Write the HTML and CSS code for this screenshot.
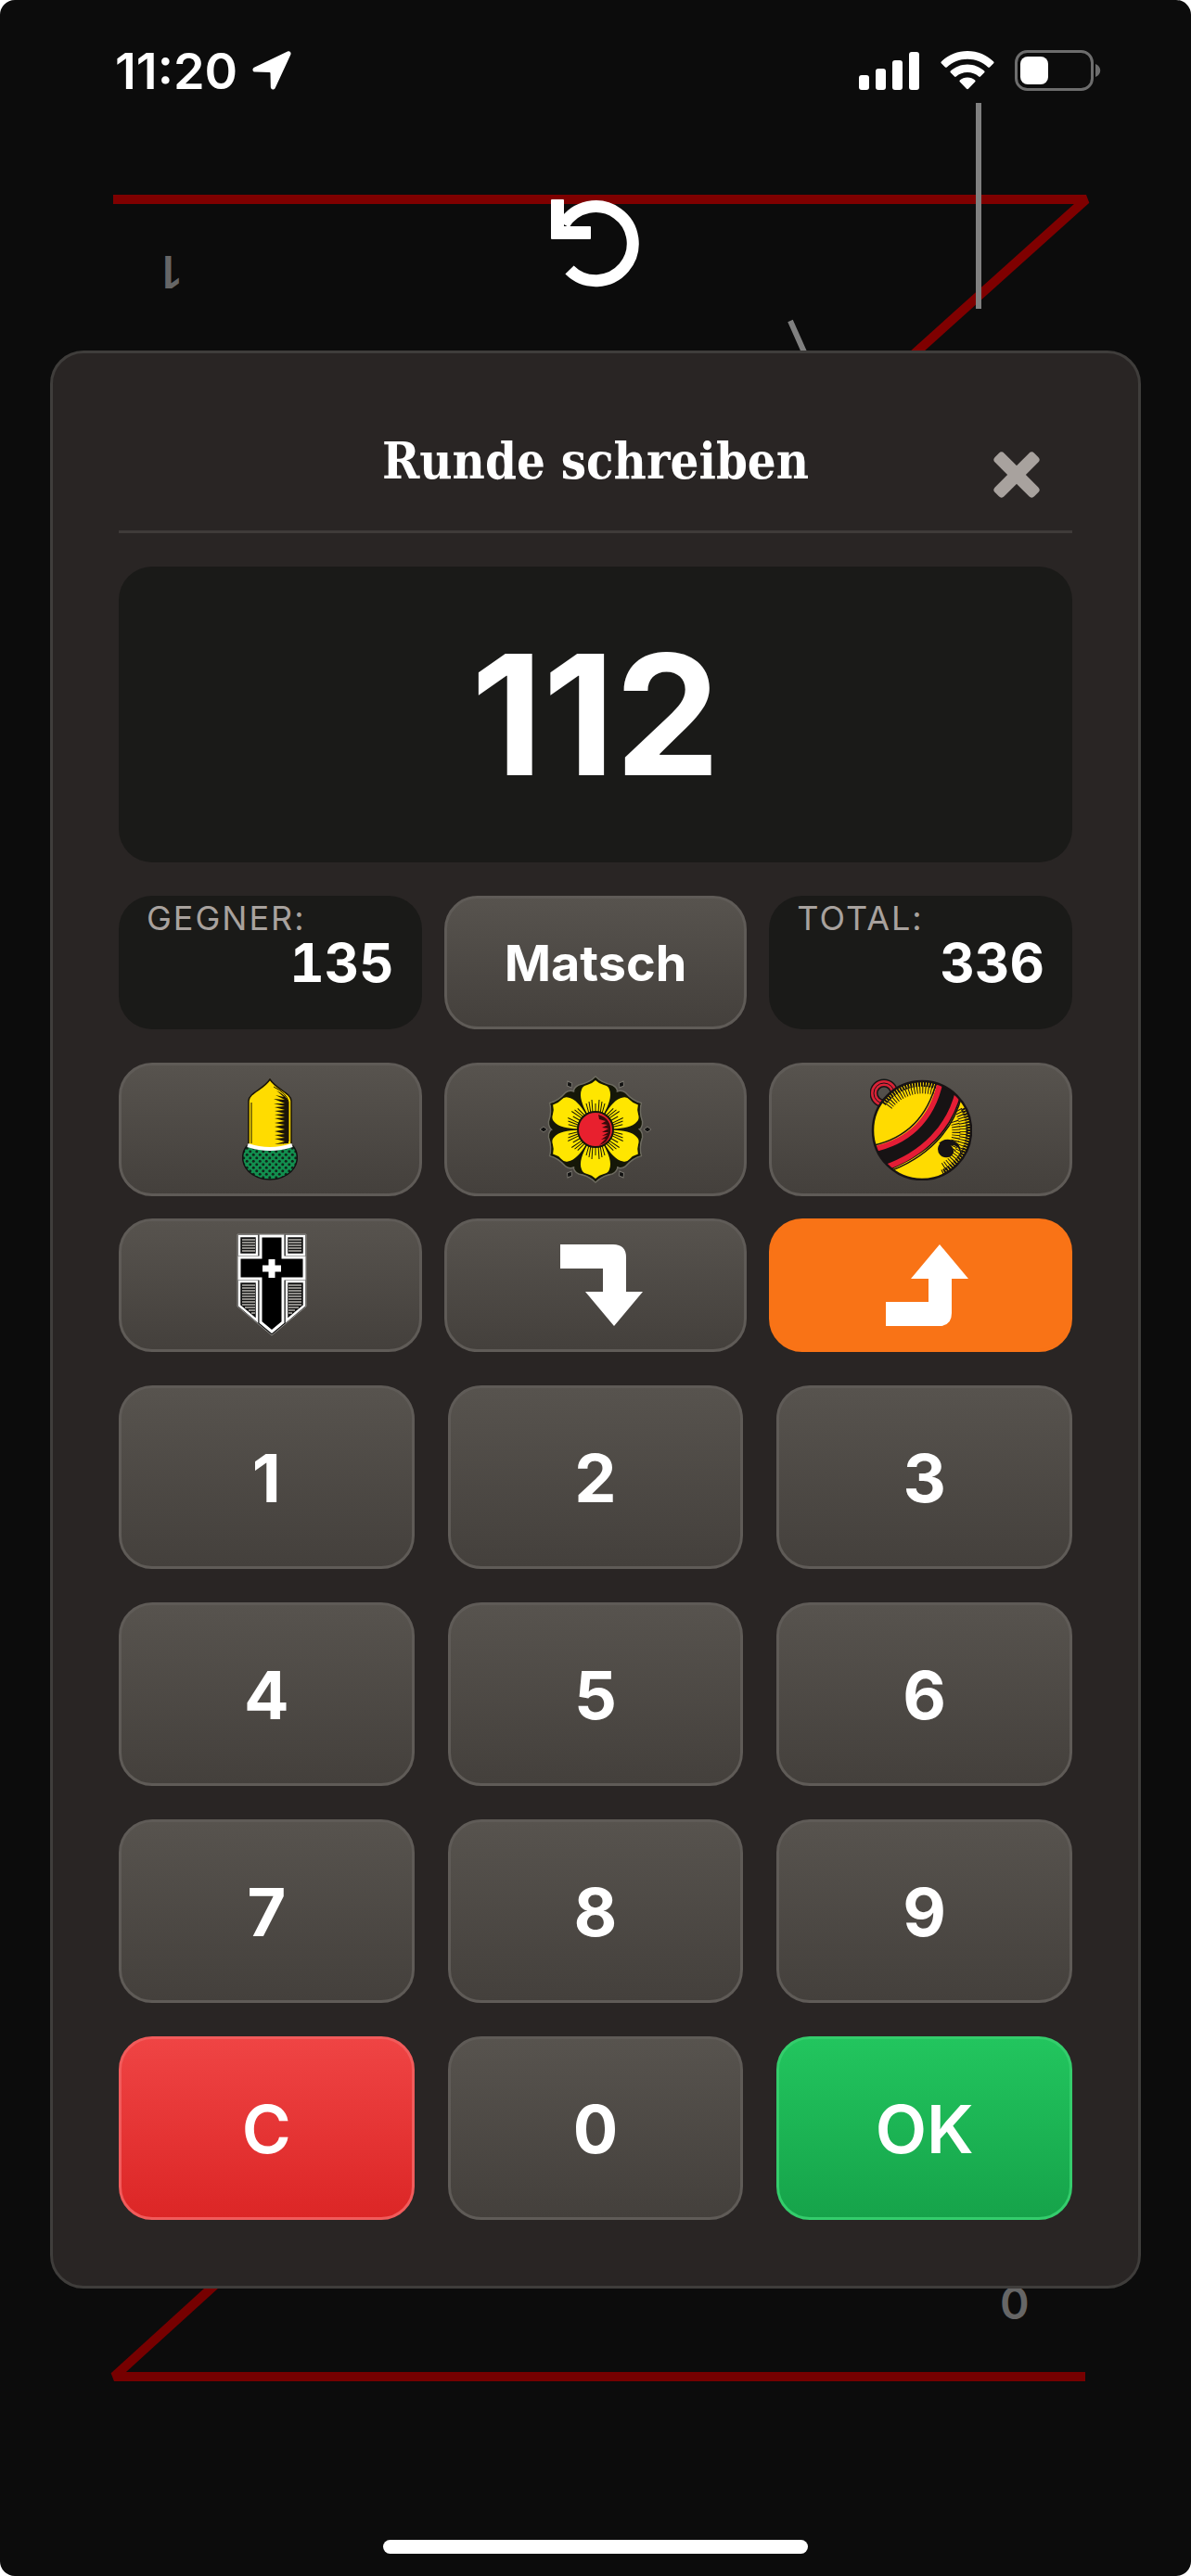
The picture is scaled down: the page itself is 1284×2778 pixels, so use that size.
FILE: index.html
```html
<!DOCTYPE html>
<html lang="de">
<head>
    <meta charset="UTF-8">
    <meta name="viewport" content="width=device-width, initial-scale=1.0">
    <title>Jasstafel</title>
    <link rel="stylesheet" href="styles.css">
</head>
<body>
    <div class="screen">
        <!-- Tafel -->
        <svg class="board" viewBox="0 0 1284 2778" preserveAspectRatio="none" aria-hidden="true">
            <path class="z-line" d="M122 215H1171L983 384"/>
            <path class="z-line lower" d="M1170 2563H123L234 2462"/>
            <path class="chalk" d="M1055 111V333M852 346L868 382"/>
            <text class="score" x="-195" y="-276" transform="rotate(180)">1</text>
            <text class="score" x="1078" y="2501">0</text>
        </svg>

        <div class="status-bar">
            <div class="status-left">
                <span class="time">11:20</span>
                <svg width="42" height="42" viewBox="0 0 42 42" fill="#fff"><path d="M38 .6 2.500 17.500C-.8 19.200.3 22.500 3 22.600L18.500 23Q19.500 23 19.500 24L19.800 39C20 42 23.600 42.500 24.900 39.500L41.300 4C42.300 1.600 40.400-.5 38 .6Z"/></svg>
            </div>
            <div class="status-right">
                <svg width="66" height="44" viewBox="0 0 66 44" fill="#fff">
                    <rect x="0" y="27" width="11" height="16" rx="3"/>
                    <rect x="18" y="20" width="11" height="23" rx="3"/>
                    <rect x="36" y="11" width="11" height="32" rx="3"/>
                    <rect x="54" y="2" width="11" height="41" rx="3"/>
                </svg>
                <svg width="58" height="44" viewBox="0 0 58 44" fill="#fff">
                    <path d="M29 1C18 1 8 5.500.8 12.400Q0 13.300.8 14.200L5 18.400Q5.900 19.200 6.800 18.400C12.700 12.900 20.400 9.800 29 9.800S45.300 12.900 51.200 18.400Q52.100 19.200 53 18.400L57.200 14.200Q58 13.300 57.200 12.400C50 5.500 40 1 29 1Z"/>
                    <path d="M29 15.400C22 15.400 15.600 18.200 10.800 22.500Q9.900 23.400 10.800 24.300L15 28.500Q15.900 29.300 16.800 28.500C20.100 25.700 24.300 24.100 29 24.100S37.900 25.700 41.200 28.500Q42.100 29.300 43 28.500L47.200 24.300Q48.100 23.400 47.200 22.500C42.400 18.200 36 15.400 29 15.400Z"/>
                    <path d="M29 29.600C25.800 29.600 23 30.700 20.800 32.500Q19.900 33.400 20.800 34.300L28 41.800Q29 42.700 30 41.800L37.200 34.300Q38.100 33.400 37.200 32.500C35 30.700 32.200 29.600 29 29.600Z"/>
                </svg>
                <svg width="94" height="44" viewBox="0 0 94 44">
                    <rect x="1.500" y="1.500" width="82" height="41" rx="12" fill="none" stroke="#6d6d6d" stroke-width="3"/>
                    <rect x="6" y="7" width="30" height="30" rx="8" fill="#fff"/>
                    <path d="M87 15C94 18 94 26 87 29Z" fill="#6d6d6d"/>
                </svg>
            </div>
        </div>

        <button class="undo" type="button" aria-label="Rückgängig">
            <svg width="96" height="96" viewBox="0 0 96 96" fill="none" stroke="#fff" stroke-width="13">
                <path d="M1 1H13V30H42V42H1Z" fill="#fff" stroke-width="2" stroke-linejoin="round"/>
                <path d="M14 27A40 40 0 1 1 20 76"/>
            </svg>
        </button>

        <main class="dialog" role="dialog" aria-labelledby="dialog-title">
            <header class="dialog-header">
                <h1 id="dialog-title">Runde schreiben</h1>
                <button class="close" type="button" aria-label="Schliessen">
                    <svg width="50" height="50" viewBox="-25 -25 50 50" fill="#a8a29e">
                        <rect x="-30" y="-7" width="60" height="14" rx="4" transform="rotate(45)"/>
                        <rect x="-30" y="-7" width="60" height="14" rx="4" transform="rotate(-45)"/>
                    </svg>
                </button>
            </header>

            <output class="display">112</output>

            <div class="grid info">
                <div class="info-box">
                    <span class="label">GEGNER:</span>
                    <span class="value">135</span>
                </div>
                <button class="key small" type="button">Matsch</button>
                <div class="info-box">
                    <span class="label">TOTAL:</span>
                    <span class="value">336</span>
                </div>
            </div>

            <div class="grid suits">
                <button class="key small" type="button" aria-label="Eichel">
                    <svg width="60" height="110" viewBox="0 0 60 110">
                        <defs>
                            <pattern id="cup" width="7" height="7" patternUnits="userSpaceOnUse">
                                <rect width="7" height="7" fill="#12904f"/>
                                <circle cx="1.750" cy="1.750" r="1.500" fill="#10261a"/>
                                <circle cx="5.250" cy="5.250" r="1.500" fill="#10261a"/>
                            </pattern>
                        </defs>
                        <path d="M7 72V24C8 15 23 12 30 1C37 12 52 15 53 24V72Q30 79 7 72Z" fill="#ffdc00" stroke="#1a1408" stroke-width="1.500"/>
                        <path d="M10 70V26M34 9Q48 16 50 25V68L44 70" fill="none" stroke="#1a1408"/>
                        <path d="M37 13Q49 19 50 26V70L35 71 46 68 35 65 46 64 35 61 46 60 35 57 46 55 35 52 46 50 35 48 46 46 35 43 46 42 35 39 46 38 35 35 46 34 35 31 46 30 34 27 46 27 34 22 46 23 36 18 45 20Z" fill="#1a1408"/>
                        <path d="M5 73C1 78 0 83 1 89C3 101 16 109 30 109S57 101 59 89C60 83 59 78 55 73Q30 81 5 73Z" fill="url(#cup)" stroke="#111" stroke-width="1.500"/>
                        <path d="M6 72Q30 80 54 72" fill="none" stroke="#fff" stroke-width="4"/>
                    </svg>
                </button>
                <button class="key small" type="button" aria-label="Rosen">
                    <svg width="120" height="116" viewBox="-60 -58 120 116">
                        <defs>
                            <path id="petal" d="M-10-14C-27-32-27-44-18-48Q-7-50 0-57Q7-50 18-48C27-44 27-32 10-14Z" fill="#151708" stroke="#6d6b60" stroke-width="1.500"/>
                            <path id="petal-base" d="M-10-14C-26-32-26-43-17-47Q-6-49 0-56Q6-49 17-47C26-43 26-32 10-14Z" fill="#151708"/>
                            <g id="petal-top">
                                <path d="M-9-17C-14-26-18-36-15-43Q-14-47-9-48Q-4-49 0-53Q4-49 9-48Q14-47 15-43C18-36 14-26 9-17Z" fill="#ffe600"/>
                                <path d="M-7-17-10-28M-5-17-7-30M-3-18-4-32M0-18V-28M3-18 4-32M5-17 7-30M7-17 10-28" stroke="#151708"/>
                            </g>
                            <path id="leaf-dot" d="M0-60 3-56 0-52-3-56Z"/>
                        </defs>
                        <g fill="#111" stroke="#77746c">
                            <use href="#leaf-dot" transform="rotate(30)"/><use href="#leaf-dot" transform="rotate(90)"/><use href="#leaf-dot" transform="rotate(150)"/>
                            <use href="#leaf-dot" transform="rotate(210)"/><use href="#leaf-dot" transform="rotate(270)"/><use href="#leaf-dot" transform="rotate(330)"/>
                        </g>
                        <use href="#petal"/><use href="#petal" transform="rotate(60)"/><use href="#petal" transform="rotate(120)"/>
                        <use href="#petal" transform="rotate(180)"/><use href="#petal" transform="rotate(240)"/><use href="#petal" transform="rotate(300)"/>
                        <use href="#petal-base"/><use href="#petal-base" transform="rotate(60)"/><use href="#petal-base" transform="rotate(120)"/>
                        <use href="#petal-base" transform="rotate(180)"/><use href="#petal-base" transform="rotate(240)"/><use href="#petal-base" transform="rotate(300)"/>
                        <use href="#petal-top"/><use href="#petal-top" transform="rotate(60)"/><use href="#petal-top" transform="rotate(120)"/>
                        <use href="#petal-top" transform="rotate(180)"/><use href="#petal-top" transform="rotate(240)"/><use href="#petal-top" transform="rotate(300)"/>
                        <circle r="19" fill="#e8202e" stroke="#151708" stroke-width="2"/>
                        <path d="M3-16Q18-12 16 4Q13 15 4 17L11 10 6 11 13 6 7 7 14 3 7 3 14-1 7-2 13-5 6-6 11-9 4-11Z" fill="#3a0a0a"/>
                    </svg>
                </button>
                <button class="key small" type="button" aria-label="Schellen">
                    <svg width="110" height="110" viewBox="0 0 110 110">
                        <defs><clipPath id="bell"><circle cx="56" cy="56" r="53"/></clipPath></defs>
                        <circle cx="15" cy="16" r="11" fill="none" stroke="#171314" stroke-width="9"/>
                        <circle cx="15" cy="16" r="11" fill="none" stroke="#d92337" stroke-width="6"/>
                        <circle cx="15" cy="16" r="11" fill="none" stroke="#171314"/>
                        <circle cx="56" cy="56" r="53" fill="#ffdb00"/>
                        <g clip-path="url(#bell)">
                            <!-- Schraffur -->
                            <g fill="none" stroke="#171314">
                                <path d="M14 27A51 51 0 0 1 72 8M101 32A51 51 0 0 1 78 102" stroke-width="7" stroke-dasharray="2 1"/>
                                <path d="M20 30A45 45 0 0 1 70 14M95 34A45 45 0 0 1 78 96" stroke-width="9" stroke-dasharray="1 2"/>
                                <path d="M91 46A37 37 0 0 1 88 76" stroke-width="9" stroke-dasharray="1 2"/>
                            </g>
                            <path d="M-2 80C36 72 66 52 76-2L100 14C88 58 64 82 14 102Z" fill="#171314"/>
                            <path d="M0 77C38 70 67 47 76 2M14 97C58 82 86 52 95 14" fill="none" stroke="#e51d35" stroke-width="6"/>
                            <path d="M0 73C36 66 62 44 72 2M16 102C62 86 90 56 99 18" fill="none" stroke="#171314" stroke-width="1.500"/>
                        </g>
                        <circle cx="56" cy="56" r="53" fill="none" stroke="#171314" stroke-width="2.500"/>
                        <path d="M90 72A9 9 0 1 0 89 82Q92 77 87 72Q98 71 98 87Q100 68 86 66Q79 65 74 70Z" fill="#171314"/>
                    </svg>
                </button>
                <button class="key small" type="button" aria-label="Schilten">
                    <svg width="80" height="112" viewBox="-4 0 80 112">
                        <path d="M1 1H75V79L38 110 1 79Z" fill="#111" stroke="#8c8a86"/>
                        <path d="M3 3H22V23H3ZM54 3H73V23H54ZM3 52H22V94L3 78ZM73 52H54V94L73 78Z" fill="#111" stroke="#fff" stroke-width="2.500"/>
                        <path d="M6 7H20M6 10H20M6 13H20M6 16H20M6 19H20M56 7H70M56 10H70M56 13H70M56 16H70M56 19H70M6 56H20M6 59H20M6 62H20M6 65H20M6 68H20M6 71H20M6 74H20M6 77H20M9 80H20M13 83H20M16 86H20M56 56H70M56 59H70M56 62H70M56 65H70M56 68H70M56 71H70M56 74H70M56 77H70M56 80H67M56 83H63M56 86H60" stroke="#b8b5b0" stroke-width="1.500"/>
                        <path d="M26 3H50V26H73V49H50V96L38 106 26 96V49H3V26H26Z" fill="#000" stroke="#fff" stroke-width="3"/>
                        <path d="M38 28V48M28 38H48" stroke="#fff" stroke-width="7"/>
                    </svg>
                </button>
                <button class="key small" type="button" aria-label="Undenufe">
                    <svg width="102" height="90" viewBox="-12 0 102 90" fill="#fff"><path d="M1 1H58Q72 1 72 15V52H90L59 89 28 52H47V27H1Z"/></svg>
                </button>
                <button class="key small active" type="button" aria-label="Obenabe" aria-pressed="true">
                    <svg width="102" height="90" viewBox="-12 0 102 90" fill="#fff"><path d="M1 89H58Q72 89 72 75V38H90L59 1 28 38H47V63H1Z"/></svg>
                </button>
            </div>

            <div class="grid digits">
                <button class="key" type="button">1</button>
                <button class="key" type="button">2</button>
                <button class="key" type="button">3</button>
                <button class="key" type="button">4</button>
                <button class="key" type="button">5</button>
                <button class="key" type="button">6</button>
                <button class="key" type="button">7</button>
                <button class="key" type="button">8</button>
                <button class="key" type="button">9</button>
                <button class="key clear" type="button">C</button>
                <button class="key" type="button">0</button>
                <button class="key ok" type="button">OK</button>
            </div>
        </main>

        <div class="home-bar"></div>
    </div>
</body>
</html>
```
FILE: styles.css
```css
* {
    box-sizing: border-box;
}
body {
    margin: 0;
    background-color: white;
    font-family: Inter, "Liberation Sans", sans-serif;
    color: white;
}
button {
    font-family: inherit;
    color: inherit;
    padding: 0;
    border: none;
    background: none;
    cursor: pointer;
}
svg {
    display: block;
}
.screen {
    position: relative;
    display: flex;
    flex-direction: column;
    min-height: 100vh;
    padding: 0 54px 24px;
    border-radius: 16px;
    overflow: hidden;
    background-color: #0c0c0c;
}

/* Tafel im Hintergrund */
.board {
    position: absolute;
    inset: 0;
    width: 100%;
    height: 100%;
}
.z-line {
    fill: none;
    stroke: #7f0000;
    stroke-width: 10px;
    stroke-linejoin: bevel;
}
.z-line.lower {
    stroke: #760000;
}
.chalk {
    stroke: #808080;
    stroke-width: 6px;
}
.score {
    fill: #666;
    font-size: 48px;
    font-weight: 600;
}

.status-bar {
    position: relative;
    display: flex;
    justify-content: space-between;
    align-items: center;
    height: 64px;
    margin-top: 44px;
    padding: 0 42px 0 70px;
}
.status-left, .status-right {
    display: flex;
    align-items: center;
}
.status-left {
    gap: 16px;
}
.status-right {
    gap: 22px;
}
.time {
    font-size: 54px;
    font-weight: 600;
}
.undo {
    position: relative;
    align-self: center;
    margin: 107px 0 67px;
}

.dialog {
    position: relative;
    display: flex;
    flex-direction: column;
    gap: 36px;
    padding: 71px;
    border: 3px solid #3f3d3b;
    border-radius: 36px;
    background-color: #292524;
}
.dialog-header {
    display: grid;
    grid-template-columns: 50px 1fr 50px;
    align-items: center;
    height: 123px;
    padding: 0 35px;
    border-bottom: 3px solid #3f3b39;
}
.dialog-header h1 {
    grid-column: 2;
    margin: 0;
    padding-bottom: 30px;
    font-family: "DejaVu Serif Condensed", "DejaVu Serif", serif;
    font-size: 54px;
    line-height: 72px;
    text-align: center;
}
.display {
    display: flex;
    justify-content: center;
    align-items: center;
    height: 319px;
    border-radius: 36px;
    background-color: #1a1a18;
    font-size: 180px;
    font-weight: 700;
}
.grid {
    display: grid;
    grid-template-columns: repeat(3, 1fr);
    gap: 36px;
}
.grid.info, .grid.suits {
    gap: 24px;
}
.info-box {
    display: flex;
    flex-direction: column;
    height: 144px;
    padding: 4px 30px;
    border-radius: 36px;
    background-color: #1a1a18;
}
.label {
    color: #a8a29e;
    font-size: 36px;
    line-height: 40px;
    letter-spacing: 2px;
}
.value {
    align-self: flex-end;
    font-size: 58px;
    line-height: 56px;
    font-weight: 700;
    font-variant-numeric: tabular-nums;
}
.key {
    display: flex;
    justify-content: center;
    align-items: center;
    height: 198px;
    border: 3px solid #5f5b57;
    border-radius: 36px;
    background: linear-gradient(#57534e, #44403c);
    font-size: 72px;
    font-weight: 700;
}
.key.small {
    height: 144px;
    font-size: 54px;
}
.key.active {
    border-color: #f97316;
    background: #f97316;
}
.key.clear {
    border-color: #f15b5b;
    background: linear-gradient(#ef4444, #dc2626);
    font-weight: 600;
}
.key.ok {
    border-color: #34cd6c;
    background: linear-gradient(#22c55e, #16a34a);
    font-weight: 600;
}
.home-bar {
    position: relative;
    align-self: center;
    width: 39%;
    height: 15px;
    margin-top: auto;
    border-radius: 8px;
    background-color: white;
}
```
